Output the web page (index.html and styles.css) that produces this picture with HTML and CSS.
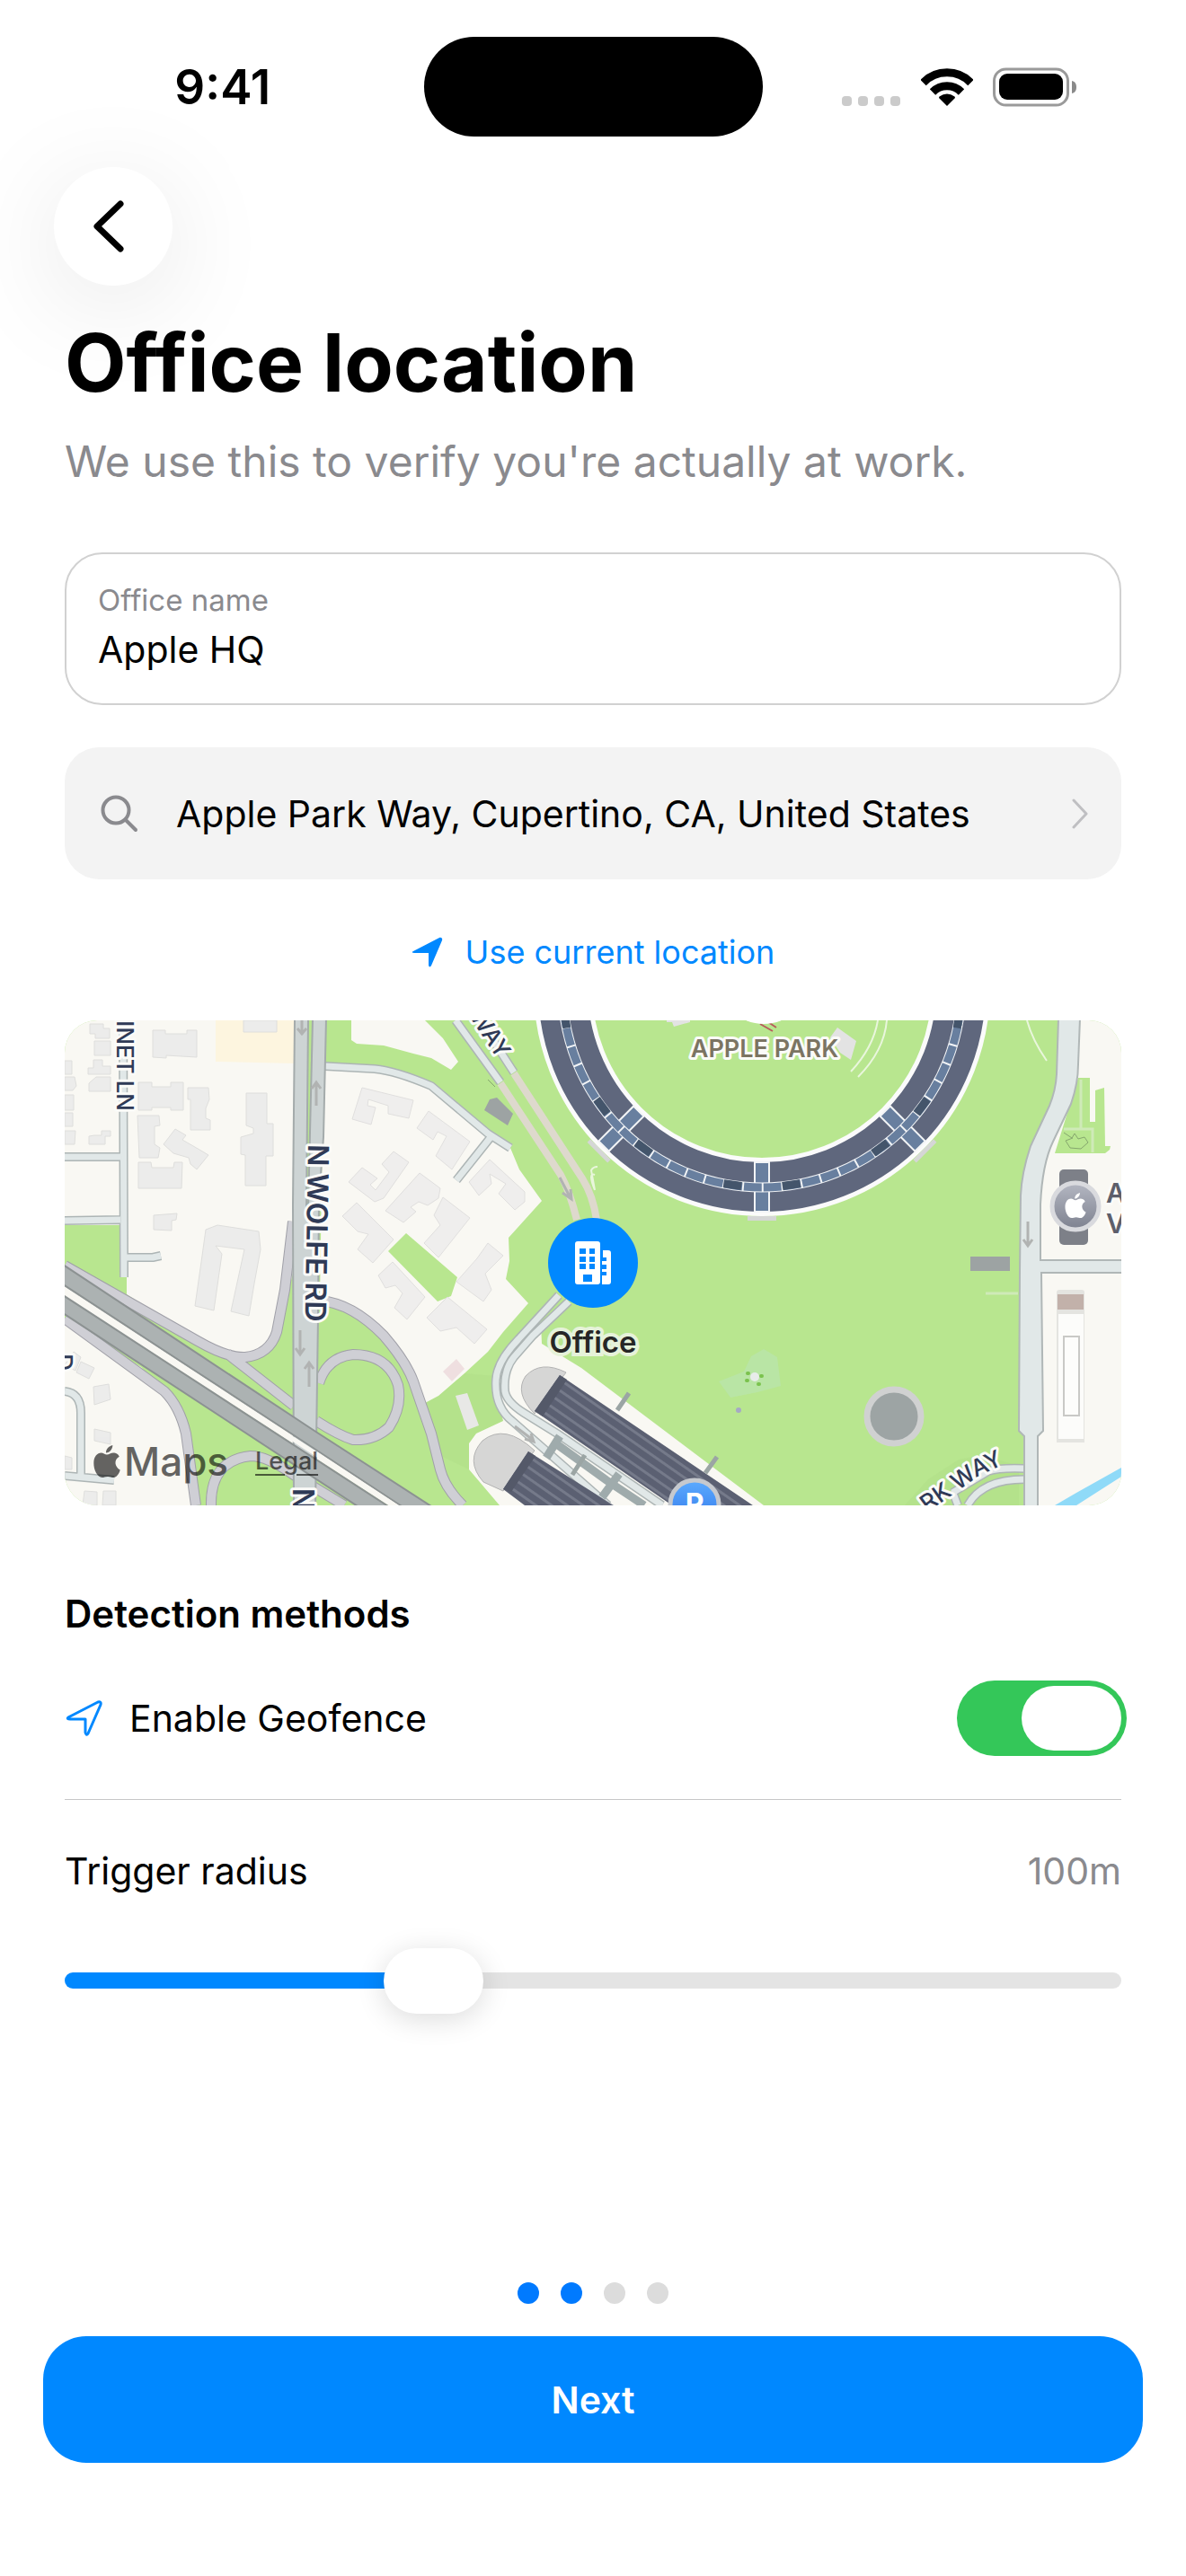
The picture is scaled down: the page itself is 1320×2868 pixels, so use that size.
FILE: index.html
```html
<!DOCTYPE html>
<html lang="en">
<head>
<meta charset="utf-8">
<meta name="viewport" content="width=device-width, initial-scale=1">
<title>Office location</title>
<link rel="stylesheet" href="styles.css">
</head>
<body>
<div class="status-bar">
  <span class="status-time">9:41</span>
  <span class="island"></span>
  <div class="status-icons">
    <svg width="66" height="44" viewBox="0 0 66 44" fill="#cbcbcb" aria-hidden="true"><rect y="32" width="11" height="11" rx="4"/><rect x="18" y="32" width="11" height="11" rx="4"/><rect x="36" y="32" width="11" height="11" rx="4"/><rect x="54" y="32" width="11" height="11" rx="4"/></svg>
    <svg width="58" height="44" viewBox="0 0 58 44" aria-hidden="true"><g fill="none" stroke="#000" stroke-width="9"><path d="M2.500 17a37 37 0 0 1 53 0"/><path d="M13 27.500a22.500 22.500 0 0 1 32 0"/></g><path d="M29 43L20.500 34.500q-1-1 0-2 8.500-6 17 0 1 1 0 2z"/></svg>
    <svg width="94" height="44" viewBox="0 0 94 44" aria-hidden="true"><rect x="1.500" y="2" width="82" height="40" rx="13" fill="none" stroke="#9a9a9a" stroke-width="3"/><rect x="7" y="7" width="71" height="29" rx="9"/><path d="M88 15c4 1 5 4 5 7s-1 6-5 7z" fill="#8a8a8a"/></svg>
  </div>
</div>

<main class="content">
  <button class="back" type="button" aria-label="Back">
    <svg width="34" height="58" viewBox="0 0 34 58" fill="none" stroke="#000" stroke-width="7" stroke-linecap="round" stroke-linejoin="round"><path d="M30 4L4 29l26 25"/></svg>
  </button>
  <h1 class="title">Office location</h1>
  <p class="subtitle">We use this to verify you're actually at work.</p>

  <div class="field">
    <label class="field-label" for="office-name">Office name</label>
    <input class="field-input" id="office-name" type="text" value="Apple HQ">
  </div>

  <button class="search" type="button">
    <svg width="42" height="42" viewBox="0 0 42 42" fill="none" stroke="#8a8a8e" stroke-width="4" stroke-linecap="round" aria-hidden="true"><circle cx="17" cy="17" r="14.500"/><path d="M28 28l11 11"/></svg>
    <span class="search-text">Apple Park Way, Cupertino, CA, United States</span>
    <svg width="18" height="34" viewBox="0 0 18 34" fill="none" stroke="#bfbfc2" stroke-width="3" stroke-linecap="round" stroke-linejoin="round" aria-hidden="true"><path d="M2 2l14 15L2 32"/></svg>
  </button>

  <button class="locate" type="button">
    <svg width="36" height="36" viewBox="0 0 36 36" fill="#0088ff" aria-hidden="true"><path d="M2 17L31 2c2-1 4 1 3 3L22 33c-1 2-3 2-3-1V19H4c-3 0-4-1-2-2z"/></svg>
    Use current location
  </button>

  <section class="map" aria-label="Map of the office">
    <svg class="map-art" viewBox="0 0 1176 540" preserveAspectRatio="xMidYMid slice">
      <defs>
        <linearGradient id="badge" x1="0" y1="0" x2="0" y2="1"><stop offset="0" stop-color="#b4b7c2"/><stop offset="1" stop-color="#7d818f"/></linearGradient>
        <linearGradient id="parking" x1="0" y1="0" x2="0" y2="1"><stop offset="0" stop-color="#5cabff"/><stop offset="1" stop-color="#2f74e8"/></linearGradient>
        <pattern id="roof" width="10" height="10" patternUnits="userSpaceOnUse" patternTransform="rotate(35)"><rect width="10" height="10" fill="#5b6072"/><rect width="10" height="3" fill="#757a8a"/></pattern>
        <symbol id="apple-logo" viewBox="0 0 28 34"><path d="M20 0c0 4-3 8-7 8 0-4 3-7 7-8zM14 10c2 0 4-2 7-2 2 0 5 1 6 4-6 3-5 11 1 14-1 4-4 8-7 8-2 0-4-1-6-1-3 0-4 1-6 1C4 34 0 26 0 19 0 12 4 8 8 8c2 0 4 2 6 2z"/></symbol>
      </defs>
      <rect width="1176" height="540" fill="#b8e68f"/>
      <path fill="#b1df89" d="M935 540l26-29 34-22 25-5 42 12v44zM445 393l-29 25-15 8 20 60 29 14 8-40 30-14-10-50z" opacity=".6"/>
      <!-- built-up ground -->
      <g fill="#f9f8f3">
        <path d="M0 0H256V275L236 347Q228 375 188 380L148 357 69 305V286L62 228H0z"/>
        <path d="M0 307L360 540H375L0 295zM0 337L85 386 115 420 135 453 145 540H0z"/>
        <path d="M319 0V22l6 4 30 2 33 9 20 5 22 13 8-9-17-26L401 0z"/>
        <path d="M288 51H345L408 73 471 126 496 142 506 166 531 201 494 242 495 268 491 288 516 315 488 347 471 369 445 393 416 418 401 426 388 406 355 351 311 320 284 312z"/>
        <path d="M530 337L531 360 575 387 778 540H484L450 500V471L458 460 488 446 478 400 500 360z"/>
        <path d="M1118 0H1176V540H1076V190L1100 130 1118 80z"/>
      </g>
      <path fill="#fdf5df" d="M168 0h88v48l-88-2z"/>
      <path fill="#b8e68f" d="M1102 148L1128 64H1141V113H1147V78L1157 75 1158 140H1164L1163 144 1158 148zM380 237L360 257 415 313 430 307 437 286z"/>
      <path fill="none" stroke="#cfeab8" stroke-width="3" d="M1131 66v54M1112 121h32v26M1025 304h36"/>
      <path fill="#8fdaf8" d="M1102 540L1126 526 1176 498V508L1126 540z"/>
      <!-- houses -->
      <g fill="#ececeb" stroke="#dededc" stroke-width="1">
        <path d="M28 4h15v5h7v11H34v-5h-6zM33 23h18v16H33zM32 44h10v7h9v9H26v-7h6zM27 70l8-7h16v16H27zM33 128h8v-5h10v6h-6v9H27v-9zM0 45h8v15H0zM0 63h11l2 10-4 5H0zM0 83h10v17H0zM0 103h9v15H0zM0 123h12l-1 15H0z"/>
        <path d="M98 11h14v4h24v-4h11v30l-34-2v3L98 41zM199 0h37v13h-37zM82 69h15v5h21v-5h14v31h-14v-3H97v3H82zM137 75h23l1 13-4 10v11l5 2v11h-22V88h-3zM81 106h24l1 11-6 1v20l6 4-2 11H83z"/>
        <path d="M110 138l13-17 12 7-4 5 19 11 10 6-13 16-7-6-2-7-17-5zM82 158h14l1 6h24l1-6h9l-1 29H82zM202 81h23v34h7v36h-8v33h-23v-34l-5-1v-19l14-4v-6l-8-3zM99 217l26-2-1 7-5 1v11l-20-1z"/>
        <path d="M170 228l46 7 2 20-7 38-6 36-20-5 15-69-32-4 7 9-9 63-21-5 8-56 4-29z"/>
        <path d="M10 369l8 6-6 15-12-6zM18 380l15 7-6 12-14-7zM32 408l17-3 2 17-18 6zM33 455l18 4v13l-18-4zM0 485l8 2v13H0zM22 524l14 1v15H20zM43 524h14v16H42z"/>
      </g>
      <g fill="#efeeed" stroke="#e0dfde" stroke-width="1">
        <path d="M331 75l57 14-5 20-23-5v-9l-22-7-1 7 9 2-5 19-21-6zM316 180l15-16 17 12-8 7 6 6 15-20-8-9 13-14 17 12-28 40-10 4zM357 212l38-42 23 17-2 11-12 8-10-4-9 6 6 5-14 12zM309 218l16-15 41 41-23 26-17-15 12-17-12-3zM349 284l16-15 36 39-20 25-14-13 9-16-8-9-11 3z"/>
        <path d="M392 120l13-19 46 34-20 31-18-15 12-22-10-5-5 9zM450 180l23-25 39 36v11l-11 9-18-18 8-11-18-11 2 11-14 13zM421 197l30 23-35 44-16-16 18-20-7-11zM471 248l17 14-20 20 7 18-9 13-30-22 23-26zM426 308l44 36-14 16-20-18-18 4-15-15z"/>
      </g>
      <path fill="#efdfe0" d="M436 377l9 11-14 14-10-11z"/>
      <path fill="#e8e8e6" d="M435 418l13-3 13 36-13 5z"/>
      <path fill="#9da3a3" d="M473 88l8-2 18 18-6 13-26-17zM1008 263h44v16h-44z"/>
      <!-- side streets: casing, then surface -->
      <g fill="none" stroke-linejoin="round">
        <g stroke="#adb5b5" stroke-width="10">
          <path d="M65 0L66 286M0 152H62M0 223L62 222M70 264H98L107 262M0 413Q18 415 18 437V506M0 507L55 512"/>
          <path d="M290 51L345 54Q368 56 408 73L471 126 496 142M475 129L436 178M435 0L485 69M474 18L500 58"/>
          <path d="M550 306L505 355Q481 380 480 400 478 430 498 446L531 475 605 540M561 313L521 351 500 375Q488 390 490 413 492 425 511 437L548 460 665 540"/>
          <path d="M988 526L1028 502Q1040 498 1068 499M1005 540Q1021 511 1068 511M988 524l6 16"/>
        </g>
        <g stroke="#e1e8e8" stroke-width="7">
          <path d="M65 0L66 286M0 152H62M0 223L62 222M66 264H98L107 262M0 413Q18 415 18 437V506M0 507L55 512"/>
          <path d="M290 51L345 54Q368 56 408 73L471 126 496 142M475 129L436 178M435 0L485 69M474 18L500 58"/>
          <path d="M550 306L505 355Q481 380 480 400 478 430 498 446L531 475 605 540M561 313L521 351 500 375Q488 390 490 413 492 425 511 437L548 460 665 540"/>
          <path d="M988 526L1028 502Q1040 498 1068 499M1005 540Q1021 511 1068 511M988 524l6 16"/>
        </g>
        <path stroke="#ded9cd" stroke-width="8" d="M485 70L552 172Q562 190 570 222M500 59L576 176Q588 195 592 222"/>
      </g>
      <path fill="#e1e8e8" stroke="#b0b7b7" stroke-width="2" d="M1106 -2L1104 60Q1103 78 1096 95L1075 140Q1065 170 1064 195L1063 280 1062 457 1068 463V542H1083V463L1089 457 1087 281H1178V267H1086V205Q1088 160 1100 135L1120 93Q1128 70 1128 49L1130 -2z"/>
      <!-- ramps -->
      <g fill="none" stroke-linejoin="round">
        <path stroke="#a0a0a8" stroke-width="12" d="M254 224L245 300 236 347Q228 372 201 375 181 376 148 357L0 273M181 371L255 429M0 332L111 413Q128 430 135 460L146 540M283 404Q292 375 321 372 360 372 371 406 376 430 361 453 345 468 321 467 305 462 280 446M163 540Q162 490 207 485 225 485 255 506L311 540M284 312Q320 315 355 351 380 380 388 402L408 460 418 500Q423 520 443 540"/>
        <path stroke="#cfcfd5" stroke-width="10" d="M254 224L245 300 236 347Q228 372 201 375 181 376 148 357L0 273M181 371L255 429M0 332L111 413Q128 430 135 460L146 540M283 404Q292 375 321 372 360 372 371 406 376 430 361 453 345 468 321 467 305 462 280 446M163 540Q162 490 207 485 225 485 255 506L311 540M284 312Q320 315 355 351 380 380 388 402L408 460 418 500Q423 520 443 540"/>
      </g>
      <path fill="#cdd4d4" stroke="#a4abab" stroke-width="2" d="M256 -2H271L269 210 271 210 276 -2H291L288 130 283 200 282 330 279 542H255L254 205z"/>
      <path fill="#b8e68f" d="M272 0h2v46h-2z"/>
      <path fill="#acb2b2" stroke="#8c9292" stroke-width="2" d="M-2 272L278 457 408 541H375L278 477-2 294zM-2 306L360 541H326L-2 326z"/>
      <path fill="#f9f8f3" d="M0 297L372 540H363L0 304z"/>
      <!-- one-way arrows -->
      <g fill="none" stroke="#b1b3b2" stroke-width="3">
        <path d="M264 0v16M259 9l5 6 5-6M280 95V69M275 76l5-7 5 7M262 345v27M257 365l5 7 5-7M272 408v-27M267 388l5-7 5 7M1072 224v27M1067 244l5 7 5-7M551 175l12 23M554 192l10 7-1-11M501 452l20 15M512 466l10 3-3-9"/>
      </g>
      <!-- ring building -->
      <g fill="none">
        <circle cx="776" cy="-36" r="221.500" stroke="#fbfbfb" stroke-width="65"/>
        <circle cx="776" cy="-36" r="221.500" stroke="#5f677d" stroke-width="55"/>
      </g>
      <g fill="#687f9f" stroke="#f2f4f6" stroke-width="2">
        <rect x="768" y="158" width="16" height="55"/>
        <rect x="768" y="158" width="16" height="55" transform="rotate(45 776 -36)"/>
        <rect x="768" y="158" width="16" height="55" transform="rotate(-45 776 -36)"/>
      </g>
      <g fill="none">
        <circle cx="776" cy="-36" r="222" stroke="#f2f4f6" stroke-width="11"/>
        <circle cx="776" cy="-36" r="222" stroke="#687f9f" stroke-width="9" stroke-dasharray="19.800 2"/>
      </g>
      <g fill="#44556b">
        <rect x="766" y="181" width="20" height="9" transform="rotate(8.500 776 -36)"/><rect x="766" y="181" width="20" height="9" transform="rotate(-8.500 776 -36)"/>
        <rect x="766" y="181" width="20" height="9" transform="rotate(36.500 776 -36)"/><rect x="766" y="181" width="20" height="9" transform="rotate(-36.500 776 -36)"/>
        <rect x="766" y="181" width="20" height="9" transform="rotate(53.500 776 -36)"/><rect x="766" y="181" width="20" height="9" transform="rotate(-53.500 776 -36)"/>
        <rect x="766" y="181" width="20" height="9" transform="rotate(81 776 -36)"/><rect x="766" y="181" width="20" height="9" transform="rotate(-81 776 -36)"/>
      </g>
      <g fill="#d5d6d6"><rect x="760" y="218" width="32" height="5"/><rect x="760" y="218" width="32" height="5" transform="rotate(45 776 -36)"/><rect x="760" y="218" width="32" height="5" transform="rotate(-45 776 -36)"/></g>
      <path fill="none" stroke="#b85c5c" stroke-width="2" d="M774 4l14 8M783 2l9 6"/>
      <circle cx="778" cy="-46" r="50" fill="#fff"/>
      <path fill="#e3e3e3" d="M670 0h26v2l-18 5-2-5h-6zM860 8l21 15-6 21-12-8-11-17z"/>
      <path fill="none" stroke="#e9f6dc" stroke-width="2" d="M905 0Q900 30 875 57M915 0Q912 34 883 63M1071 0q6 22 22 45M590 189q-8-20 0-17M590 189l-4-22q2-4 7-4"/>
      <!-- parking decks -->
      <path fill="#d6d6d5" stroke="#b3b3b3" d="M558 392Q530 378 513 396 500 415 523 438zM523 479Q490 448 465 468 445 490 466 514L488 524z"/>
      <path fill="url(#roof)" d="M551 395L766 540H676L523 435zM516 480L611 540H512L488 522z"/>
      <path fill="#545969" d="M551 395l8 5-27 41-9-6zM516 480l8 5-27 40-9-3z"/>
      <path fill="none" stroke="#9fabac" stroke-width="9" d="M551 463l-15 24M545 470l58 42 42 28M617 505l-19 26"/>
      <path fill="none" stroke="#9ba5a4" stroke-width="5" d="M579 484l-14 22M628 415l-13 19M726 486l-13 18"/>
      <!-- pond, dome and east buildings -->
      <path fill="#b9e5a5" d="M728 402l28-11 8-17 14-8 15 9 4 32-26 7-30 6z"/>
      <circle cx="768" cy="397" r="5" fill="#e8ecea"/><circle cx="750" cy="434" r="3" fill="#a6a9c4"/>
      <path fill="none" stroke="#7bc24e" stroke-width="4" stroke-linecap="round" d="M760 393h1M775 396h1M759 401h1M772 405h1"/>
      <circle cx="923" cy="441" r="30" fill="#9da4a4" stroke="#d0d1d1" stroke-width="7"/>
      <path fill="#e4e4e0" d="M1104 303q0-3 3-3h25q3 0 3 3v167h-31z"/>
      <path fill="#c2b1aa" d="M1105 305h29v17h-29z"/>
      <path fill="#fcfcfa" d="M1106 327h28v139h-28z"/>
      <path fill="#fdfdfb" stroke="#c9c9c6" stroke-width="2" d="M1112 352h17v88h-17z"/>
      <path fill="none" stroke="#85a66d" stroke-width="1" d="M1112 125l9 6 3-5 4 6 7-2 4 6-8 7-12-1-5-8 8-3M471 66l8 8"/>
      <rect x="1107" y="166" width="32" height="84" rx="5" fill="#7d8088"/>
      <circle cx="1125" cy="207" r="26" fill="url(#badge)" stroke="#d9dade" stroke-width="5"/>
      <use href="#apple-logo" x="1113" y="192" width="24" height="28" fill="#fff"/>
      <circle cx="701" cy="539" r="27" fill="url(#parking)" stroke="#c6c9ce" stroke-width="5"/>
      <text class="parking-letter" x="701" y="550">P</text>
      <!-- labels -->
      <g class="street">
        <text transform="translate(58 101) rotate(90)" text-anchor="end">INET LN</text>
        <text transform="translate(482 44) rotate(57)" text-anchor="end">WAY</text>
        <path id="park-way" d="M900 590Q945 560 970 541L1018 507 1050 492" fill="none" stroke="none"/>
        <text text-anchor="end"><textPath href="#park-way" startOffset="97%">RK WAY</textPath></text>
        <text transform="translate(-10 390) rotate(90)" text-anchor="end">D</text>
      </g>
      <g class="avenue">
        <text transform="translate(271 138) rotate(91)">N WOLFE RD</text>
        <text transform="translate(254 521) rotate(90)">N</text>
      </g>
      <text class="place" x="779" y="41" text-anchor="middle">APPLE PARK</text>
      <g class="visitor"><text x="1159" y="203">A</text><text x="1159" y="237">V</text></g>
    </svg>
    <div class="pin">
      <span class="pin-disc">
        <svg width="40" height="48" viewBox="0 0 40 48" fill="#fff" aria-hidden="true"><path fill-rule="evenodd" d="M3 0h22q3 0 3 3v42q0 3-3 3H3q-3 0-3-3V3q0-3 3-3zM5 8v6h7V8zM16 8v6h6V8zM5 17v6h7v-6zM16 17v6h6v-6zM5 25v6h7v-6zM16 25v6h6v-6zM9 37v8h10v-8z"/><path d="M31 10h6q3 0 3 3v32q0 3-3 3h-7V38h5v-4h-5v-3h5v-5h-5v-4h5v-4h-4z"/></svg>
      </span>
      <span class="pin-label">Office</span>
    </div>
    <div class="attribution">
      <span class="brand"><svg width="30" height="36" viewBox="0 0 28 34" aria-hidden="true"><use href="#apple-logo"/></svg>Maps</span>
      <a class="legal" href="#legal">Legal</a>
    </div>
  </section>

  <h2 class="section-title">Detection methods</h2>
  <div class="toggle-row">
    <label class="toggle-label" for="geofence">
      <svg width="42" height="42" viewBox="0 0 42 42" fill="none" stroke="#0088ff" stroke-width="3" stroke-linejoin="round" aria-hidden="true"><path d="M4 20L37 3q4-1 3 3L26 38q-2 3-3-1V22H6q-4 0-2-2z"/></svg>
      Enable Geofence
    </label>
    <input class="switch" id="geofence" type="checkbox" role="switch" checked>
  </div>
  <div class="radius-row">
    <label for="radius">Trigger radius</label>
    <output class="radius-value" for="radius">100m</output>
  </div>
  <input class="slider" id="radius" type="range" min="50" max="200" value="100">
</main>

<footer class="footer">
  <div class="dots" aria-label="Step 2 of 4"><span class="dot dot-on"></span><span class="dot dot-on"></span><span class="dot"></span><span class="dot"></span></div>
  <button class="next" type="button">Next</button>
</footer>
</body>
</html>
```
FILE: styles.css
```css
* { box-sizing: border-box; }

body {
  margin: 0;
  min-height: 100vh;
  display: flex;
  flex-direction: column;
  background: #fff;
  color: #000;
  font-family: Inter, "Liberation Sans", sans-serif;
  font-size: 41px;
  line-height: 60px;
}

button, input { font: inherit; color: inherit; }
button { border: 0; cursor: pointer; }
svg { display: block; flex: none; }

.status-bar {
  display: grid;
  grid-template-columns: 1fr auto 1fr;
  align-items: center;
  padding-top: 41px;
}
.status-time {
  justify-self: center;
  padding-left: 24px;
  font-size: 53px;
  font-weight: 600;
}
.island {
  width: 377px;
  height: 111px;
  border-radius: 56px;
  background: #000;
}
.status-icons {
  display: flex;
  justify-content: flex-end;
  gap: 22px;
  padding-right: 121px;
}

.content {
  display: flex;
  flex-direction: column;
  padding: 34px 72px 0;
}
.back {
  width: 132px;
  height: 132px;
  margin-left: -12px;
  padding: 0 10px 0 0;
  display: grid;
  place-items: center;
  border-radius: 50%;
  background: #fff;
  box-shadow: 0 20px 120px rgba(0, 0, 0, 0.1);
}
.title {
  margin: 30px 0 0;
  font-size: 89px;
  line-height: 112px;
  font-weight: 700;
}
.subtitle {
  margin: 22px 0 0;
  font-size: 48px;
  line-height: 64px;
  color: #8a8a8e;
}
.field {
  margin-top: 69px;
  display: flex;
  flex-direction: column;
  gap: 6px;
  padding: 29px 35px 33px;
  border: 2px solid #d1d1d1;
  border-radius: 42px;
}
.field-label {
  font-size: 33px;
  line-height: 44px;
  color: #8a8a8e;
}
.field-input {
  width: 100%;
  height: 54px;
  padding: 0;
  border: 0;
  outline: 0;
  background: none;
}
.search {
  margin-top: 47px;
  height: 147px;
  display: flex;
  align-items: center;
  padding: 0 37px 0 40px;
  border-radius: 38px;
  background: #f3f3f3;
  text-align: left;
}
.search-text {
  flex: 1;
  margin-left: 42px;
}
.locate {
  align-self: center;
  margin-top: 51px;
  display: flex;
  align-items: center;
  gap: 24px;
  padding: 0;
  background: none;
  color: #0088ff;
  font-size: 36px;
}

.map {
  position: relative;
  margin-top: 46px;
  overflow: hidden;
  border-radius: 36px;
}
.map-art {
  width: 100%;
  height: auto;
}
.street, .avenue, .place, .visitor {
  paint-order: stroke;
  stroke: #fbfbf8;
  stroke-width: 6px;
  stroke-linejoin: round;
}
.street {
  font-size: 26px;
  font-weight: 500;
  fill: #2f3a56;
}
.avenue {
  font-size: 32px;
  font-weight: 600;
  fill: #2f3a56;
}
.place {
  font-size: 27px;
  font-weight: 600;
  fill: #7b7462;
}
.visitor {
  font-size: 30px;
  font-weight: 600;
  fill: #5d5f6b;
}
.parking-letter {
  font-size: 32px;
  font-weight: 700;
  fill: #fff;
  text-anchor: middle;
}
.pin {
  position: absolute;
  top: 50%;
  left: 50%;
  display: flex;
  flex-direction: column;
  align-items: center;
  gap: 16px;
  transform: translate(-50%, -50px);
}
.pin-disc {
  width: 100px;
  height: 100px;
  display: grid;
  place-items: center;
  border-radius: 50%;
  background: #0088ff;
}
.pin-label {
  font-size: 33px;
  line-height: 44px;
  font-weight: 600;
  color: #262626;
  -webkit-text-stroke: 8px #e6f2da;
  paint-order: stroke fill;
}
.attribution {
  position: absolute;
  left: 32px;
  bottom: 19px;
  display: flex;
  align-items: center;
  gap: 30px;
  color: #000;
  opacity: 0.6;
}
.brand {
  display: flex;
  align-items: center;
  gap: 4px;
  font-size: 44px;
  font-weight: 500;
}
.legal {
  color: inherit;
  font-size: 27px;
  font-weight: 500;
  text-underline-offset: 5px;
}

.section-title {
  margin: 91px 0 0;
  font-size: 42px;
  line-height: 60px;
  font-weight: 600;
}
.toggle-row {
  margin-top: 44px;
  padding-bottom: 48px;
  display: flex;
  align-items: center;
  justify-content: space-between;
  border-bottom: 1px solid #c6c6c8;
}
.toggle-label {
  display: flex;
  align-items: center;
  gap: 30px;
}
.switch {
  appearance: none;
  width: 189px;
  height: 84px;
  margin: 0 -6px 0 0;
  padding: 6px;
  display: flex;
  border-radius: 42px;
  background: #e4e4e4;
}
.switch::before {
  content: "";
  width: 111px;
  height: 72px;
  border-radius: 36px;
  background: #fff;
}
.switch:checked {
  justify-content: flex-end;
  background: #34c759;
}
.radius-row {
  margin-top: 49px;
  display: flex;
  justify-content: space-between;
}
.radius-value { color: #8a8a8e; }
.slider {
  appearance: none;
  width: 100%;
  height: 73px;
  margin: 55px 0 0;
  background: none;
}
.slider::-webkit-slider-runnable-track {
  height: 18px;
  border-radius: 9px;
  background: linear-gradient(to right, #0088ff 34%, #e4e4e4 34%);
}
.slider::-webkit-slider-thumb {
  appearance: none;
  width: 111px;
  height: 73px;
  margin-top: -27px;
  border-radius: 37px;
  background: #fff;
  box-shadow: 0 6px 32px rgba(0, 0, 0, 0.14);
}

.footer {
  margin-top: auto;
  padding: 48px 48px 126px;
}
.dots {
  display: flex;
  justify-content: center;
  gap: 24px;
}
.dot {
  width: 24px;
  height: 24px;
  border-radius: 50%;
  background: #dcdcdc;
}
.dot-on { background: #007aff; }
.next {
  width: 100%;
  height: 141px;
  margin-top: 36px;
  border-radius: 48px;
  background: #0088ff;
  color: #fff;
  font-weight: 600;
}
```
